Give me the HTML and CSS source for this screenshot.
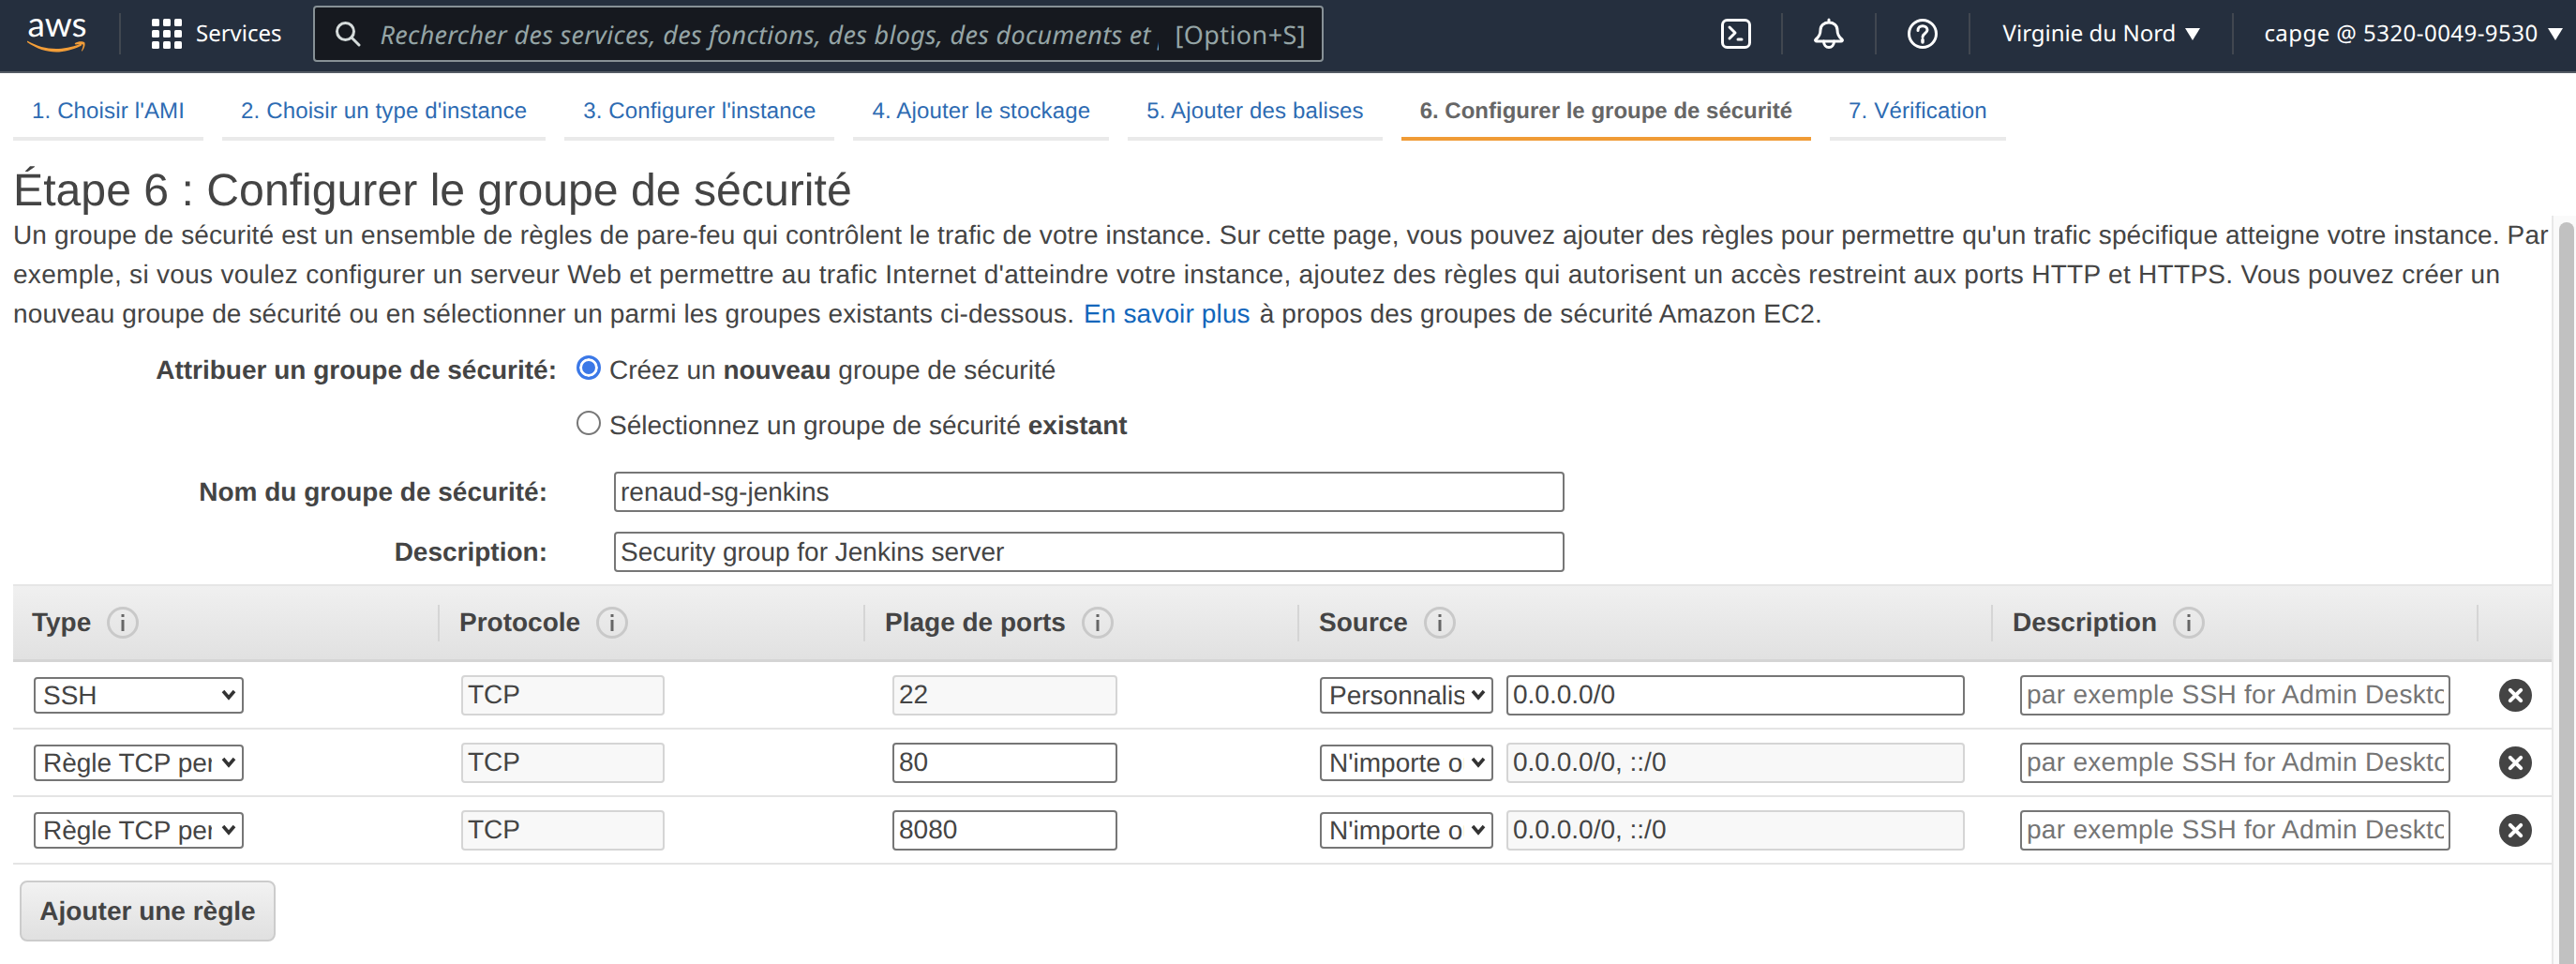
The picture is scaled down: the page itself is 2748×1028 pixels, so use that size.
FILE: index.html
```html
<!DOCTYPE html>
<html lang="fr">
<head>
  <meta charset="UTF-8">
  <title>Configurer le groupe de sécurité</title>
  <link rel="stylesheet" href="styles.css">
</head>
<body>
  <!-- Top bar -->
  <nav class="topbar">
    <div class="aws-logo">
      <span class="aws-word">aws</span>
      <svg class="aws-smile" width="64" height="15" viewBox="0 0 64 15">
        <path d="M0 2C10 9 21 12.500 31 12.500C39 12.500 49 10 57 6C59 5 58 3 56 4C48 7.500 38 9 31 9C20 9 10 6 1 1C0 .5-.5 1.500 0 2Z"/>
        <path d="M51 3C54 1 59 1 61 2C62 3 62 7 59 11C58.500 12 58 11.500 58 11C59 9 60 5 59.500 4.500C59 4 55 4 52 4.500C51 4.600 50.500 3.500 51 3Z"/>
      </svg>
    </div>
    <span class="nav-sep sep-logo"></span>
    <svg class="grid-icon" width="32" height="32" viewBox="0 0 32 32">
      <rect width="8" height="8" rx="1.500"/><rect x="12" width="8" height="8" rx="1.500"/><rect x="24" width="8" height="8" rx="1.500"/>
      <rect y="12" width="8" height="8" rx="1.500"/><rect x="12" y="12" width="8" height="8" rx="1.500"/><rect x="24" y="12" width="8" height="8" rx="1.500"/>
      <rect y="24" width="8" height="8" rx="1.500"/><rect x="12" y="24" width="8" height="8" rx="1.500"/><rect x="24" y="24" width="8" height="8" rx="1.500"/>
    </svg>
    <span class="services">Services</span>
    <div class="search">
      <svg class="search-icon" width="28" height="28" viewBox="0 0 28 28">
        <circle cx="11.500" cy="11.500" r="9"/>
        <path d="M18 18l8 8"/>
      </svg>
      <input class="search-input" type="text" placeholder="Rechercher des services, des fonctions, des blogs, des documents et plus encore">
      <span class="search-key">[Option+S]</span>
    </div>
    <svg class="nav-icon icon-terminal" width="32" height="32" viewBox="0 0 32 32">
      <rect x="1.500" y="1.500" width="29" height="29" rx="5"/>
      <path d="M9 9l6 6-6 6M18 22h4"/>
    </svg>
    <span class="nav-sep"></span>
    <svg class="nav-icon icon-bell" width="32" height="34" viewBox="0 0 32 34">
      <path d="M16 2v3M2 23c4-3 5-6 5-10 0-5 4-8 9-8s9 3 9 8c0 4 1 7 5 10 1 1 0 2-1 2H3c-1 0-2-1-1-2Z"/>
      <path d="M10.500 25c0 4 2.500 6.500 5.500 6.500s5.500-2.500 5.500-6.500"/>
    </svg>
    <span class="nav-sep"></span>
    <svg class="nav-icon icon-help" width="32" height="32" viewBox="0 0 32 32">
      <circle cx="16" cy="16" r="14.500"/>
      <path d="M11 12.500c0-3 2.200-4.800 5-4.800s5 1.800 5 4.300c0 3.500-5 3.500-5 7.500"/>
      <path class="help-dot" d="M16 22.500v2.500"/>
    </svg>
    <span class="nav-sep"></span>
    <span class="nav-menu menu-region">Virginie du Nord <i class="caret"></i></span>
    <span class="nav-sep"></span>
    <span class="nav-menu menu-account">capge @ 5320-0049-9530 <i class="caret"></i></span>
  </nav>

  <!-- Wizard tabs -->
  <ul class="tabs">
    <li class="tab">1. Choisir l'AMI</li>
    <li class="tab">2. Choisir un type d'instance</li>
    <li class="tab">3. Configurer l'instance</li>
    <li class="tab">4. Ajouter le stockage</li>
    <li class="tab">5. Ajouter des balises</li>
    <li class="tab tab-active">6. Configurer le groupe de sécurité</li>
    <li class="tab">7. Vérification</li>
  </ul>

  <h1 class="page-title">Étape 6 : Configurer le groupe de sécurité</h1>

  <div class="scroll-area">
    <main class="content">
      <p class="intro">Un groupe de sécurité est un ensemble de règles de pare-feu qui contrôlent le trafic de votre instance. Sur cette page, vous pouvez ajouter des règles pour permettre qu'un trafic spécifique atteigne votre instance. Par <span class="intro-wide">exemple, si vous voulez configurer un serveur Web et permettre au trafic Internet d'atteindre votre instance, ajoutez des règles qui autorisent un accès restreint aux ports HTTP et HTTPS. Vous pouvez créer un</span> nouveau groupe de sécurité ou en sélectionner un parmi les groupes existants ci-dessous. <a class="learn-more" href="#">En savoir plus</a> à propos des groupes de sécurité Amazon EC2.</p>

      <div class="radio-row radio-first">
        <span class="radio-title">Attribuer un groupe de sécurité:</span>
        <label class="radio-label"><input class="radio" type="radio" name="sg" checked><span>Créez un <b>nouveau</b> groupe de sécurité</span></label>
      </div>
      <div class="radio-row">
        <span class="radio-title"></span>
        <label class="radio-label"><input class="radio" type="radio" name="sg"><span>Sélectionnez un groupe de sécurité <b>existant</b></span></label>
      </div>

      <div class="field-row field-name">
        <label class="field-label">Nom du groupe de sécurité:</label>
        <input class="text-input field-input" type="text" value="renaud-sg-jenkins">
      </div>
      <div class="field-row field-desc">
        <label class="field-label">Description:</label>
        <input class="text-input field-input" type="text" value="Security group for Jenkins server">
      </div>

      <table class="rules">
        <colgroup>
          <col class="col-type"><col class="col-proto"><col class="col-ports"><col class="col-source"><col class="col-desc"><col class="col-del">
        </colgroup>
        <thead>
          <tr>
            <th><div class="th-inner th-first">Type <svg class="info" width="34" height="34" viewBox="0 0 34 34"><circle cx="17" cy="17" r="15.500"/><path d="M17 14v12M17 8v3"/></svg></div></th>
            <th><div class="th-inner">Protocole <svg class="info" width="34" height="34" viewBox="0 0 34 34"><circle cx="17" cy="17" r="15.500"/><path d="M17 14v12M17 8v3"/></svg></div></th>
            <th><div class="th-inner">Plage de ports <svg class="info" width="34" height="34" viewBox="0 0 34 34"><circle cx="17" cy="17" r="15.500"/><path d="M17 14v12M17 8v3"/></svg></div></th>
            <th><div class="th-inner">Source <svg class="info" width="34" height="34" viewBox="0 0 34 34"><circle cx="17" cy="17" r="15.500"/><path d="M17 14v12M17 8v3"/></svg></div></th>
            <th><div class="th-inner">Description <svg class="info" width="34" height="34" viewBox="0 0 34 34"><circle cx="17" cy="17" r="15.500"/><path d="M17 14v12M17 8v3"/></svg></div></th>
            <th><div class="th-inner"></div></th>
          </tr>
        </thead>
        <tbody>
          <tr>
            <td class="cell-type"><select class="select select-type"><option>SSH</option></select></td>
            <td class="cell-proto"><input class="text-input input-proto" type="text" value="TCP" disabled></td>
            <td class="cell-ports"><input class="text-input input-ports" type="text" value="22" disabled></td>
            <td class="cell-source"><div class="source-pair"><select class="select select-source"><option>Personnalisé</option></select><input class="text-input input-cidr" type="text" value="0.0.0.0/0"></div></td>
            <td class="cell-desc"><input class="text-input input-desc" type="text" placeholder="par exemple SSH for Admin Desktop"></td>
            <td class="cell-del"><svg class="del-icon" width="35" height="35" viewBox="0 0 34 34"><circle cx="17" cy="17" r="17"/><path d="M11.500 11.500l11 11M22.500 11.500l-11 11"/></svg></td>
          </tr>
          <tr>
            <td class="cell-type"><select class="select select-type"><option>Règle TCP personnalisée</option></select></td>
            <td class="cell-proto"><input class="text-input input-proto" type="text" value="TCP" disabled></td>
            <td class="cell-ports"><input class="text-input input-ports" type="text" value="80"></td>
            <td class="cell-source"><div class="source-pair"><select class="select select-source"><option>N'importe où</option></select><input class="text-input input-cidr" type="text" value="0.0.0.0/0, ::/0" disabled></div></td>
            <td class="cell-desc"><input class="text-input input-desc" type="text" placeholder="par exemple SSH for Admin Desktop"></td>
            <td class="cell-del"><svg class="del-icon" width="35" height="35" viewBox="0 0 34 34"><circle cx="17" cy="17" r="17"/><path d="M11.500 11.500l11 11M22.500 11.500l-11 11"/></svg></td>
          </tr>
          <tr>
            <td class="cell-type"><select class="select select-type"><option>Règle TCP personnalisée</option></select></td>
            <td class="cell-proto"><input class="text-input input-proto" type="text" value="TCP" disabled></td>
            <td class="cell-ports"><input class="text-input input-ports" type="text" value="8080"></td>
            <td class="cell-source"><div class="source-pair"><select class="select select-source"><option>N'importe où</option></select><input class="text-input input-cidr" type="text" value="0.0.0.0/0, ::/0" disabled></div></td>
            <td class="cell-desc"><input class="text-input input-desc" type="text" placeholder="par exemple SSH for Admin Desktop"></td>
            <td class="cell-del"><svg class="del-icon" width="35" height="35" viewBox="0 0 34 34"><circle cx="17" cy="17" r="17"/><path d="M11.500 11.500l11 11M22.500 11.500l-11 11"/></svg></td>
          </tr>
        </tbody>
      </table>

      <button class="add-rule" type="button">Ajouter une règle</button>
    </main>
    <div class="scrollbar"><div class="scrollbar-thumb"></div></div>
  </div>
</body>
</html>
```

FILE: styles.css
```css
* {
  box-sizing: border-box;
}

html,
body {
  height: 100%;
}

body {
  margin: 0;
  overflow: hidden;
  background-color: #fff;
  color: #444;
  font-family: "Liberation Sans", Arial, sans-serif;
  font-size: 28px;
  text-rendering: geometricPrecision;
}

input,
select,
button {
  text-rendering: geometricPrecision;
}

/* Top bar */
.topbar {
  display: flex;
  align-items: center;
  height: 78px;
  padding-bottom: 4px;
  border-bottom: 2px solid #545b64;
  background-color: #252f3e;
  color: #fff;
  font-family: "Noto Sans", Roboto, sans-serif;
  font-size: 24px;
}

.aws-logo {
  display: flex;
  flex-direction: column;
  align-items: center;
  width: 64px;
  margin-left: 29px;
}

.aws-word {
  font-family: Lato, sans-serif;
  font-size: 37px;
  line-height: 30px;
  height: 30px;
  margin-top: -4px;
}

.aws-smile {
  margin-top: 3px;
  fill: #f29d38;
}

.nav-sep {
  flex: none;
  width: 2px;
  height: 44px;
  background-color: #414750;
}

.sep-logo {
  margin-left: 34px;
}

.grid-icon {
  flex: none;
  margin-left: 33px;
  fill: #fff;
}

.services {
  margin-bottom: 2px;
  margin-left: 15px;
}

.search {
  display: flex;
  align-items: center;
  flex: none;
  width: 1078px;
  height: 60px;
  margin-left: 33px;
  margin-right: 424px;
  padding-left: 21px;
  border: 2px solid #879196;
  border-radius: 4px;
  background-color: #16191f;
}

.search-icon {
  flex: none;
  fill: none;
  stroke: #d5dbdb;
  stroke-width: 3;
  stroke-linecap: round;
}

.search-input {
  flex: none;
  width: 830px;
  margin-left: 21px;
  padding: 0;
  border: none;
  outline: none;
  background: transparent;
  font-family: "Noto Sans", Roboto, sans-serif;
  font-size: 27px;
  font-style: italic;
  letter-spacing: .3px;
}

.search-input::placeholder {
  color: #95a5a6;
  opacity: 1;
}

.search-key {
  margin-left: 18px;
  color: #95a5a6;
  font-size: 27px;
  letter-spacing: .4px;
  white-space: nowrap;
}

.nav-icon {
  flex: none;
  fill: none;
  stroke: #fff;
  stroke-width: 3;
  stroke-linecap: round;
  stroke-linejoin: round;
}

.icon-terminal {
  margin-right: 32px;
}

.icon-bell {
  margin: 0 33px;
}

.icon-help {
  margin: 0 33px;
}

.help-dot {
  stroke-width: 3.500;
}

.nav-menu {
  display: flex;
  align-items: center;
  gap: 10px;
  margin-bottom: 2px;
  white-space: nowrap;
}

.menu-region {
  margin-left: 35px;
  margin-right: 34px;
}

.menu-account {
  margin-left: 32px;
  letter-spacing: .45px;
}

.caret {
  width: 0;
  height: 0;
  margin-top: 2px;
  border-left: 8px solid transparent;
  border-right: 8px solid transparent;
  border-top: 13px solid #fff;
}

/* Wizard tabs */
.tabs {
  display: flex;
  gap: 20px;
  margin: 0;
  padding: 0 0 0 14px;
  list-style: none;
}

.tab {
  height: 72px;
  padding: 27px 20px 0;
  border-bottom: 4px solid #eaeaea;
  color: #2d6bb2;
  font-size: 24px;
  letter-spacing: .15px;
  line-height: 28px;
  white-space: nowrap;
}

.tab-active {
  border-bottom-color: #f09b36;
  color: #666;
  font-weight: bold;
  letter-spacing: 0;
}

.page-title {
  margin: 27px 0 0 14px;
  font-size: 48.200px;
  font-weight: normal;
  line-height: 53px;
  color: #444;
}

.scroll-area {
  display: flex;
  height: 798px;
}

.content {
  width: 2722px;
  padding-left: 14px;
}

.scrollbar {
  flex: none;
  width: 26px;
  padding: 7px 2px 0 6px;
  border-left: 2px solid #e8e8e8;
  background-color: #fafafa;
}

.scrollbar-thumb {
  height: 100%;
  border-radius: 8px 8px 0 0;
  background-color: #c1c1c1;
}

.intro {
  margin: 0;
  letter-spacing: .13px;
  line-height: 42px;
}

.intro-wide {
  letter-spacing: .3px;
}

.learn-more {
  margin: 0 2px 0 2px;
  color: #1166bb;
  text-decoration: none;
}

/* Radio rows */
.radio-row {
  display: flex;
  align-items: center;
  height: 59px;
}

.radio-first {
  margin-top: 9px;
}

.radio-title {
  width: 580px;
  font-weight: bold;
  text-align: right;
}

.radio-label {
  display: flex;
  align-items: center;
  margin-left: 21px;
  white-space: pre;
}

.radio {
  appearance: none;
  flex: none;
  width: 26px;
  height: 26px;
  margin: -5px 9px 0 0;
  border: 2px solid #777;
  border-radius: 50%;
  background-color: #fff;
}

.radio:checked {
  border: 3px solid #3b78e7;
  background-color: #3b78e7;
  box-shadow: inset 0 0 0 3px #fff;
}

/* Name / description */
.field-row {
  display: flex;
  align-items: center;
}

.field-name {
  margin-top: 20px;
}

.field-desc {
  margin-top: 21px;
}

.field-label {
  width: 570px;
  margin-right: 71px;
  font-weight: bold;
  text-align: right;
}

.text-input {
  height: 43px;
  padding: 0 5px;
  border: 2px solid #767676;
  border-radius: 4px;
  outline: none;
  background-color: #fff;
  color: #444;
  font-family: "Liberation Sans", Arial, sans-serif;
  font-size: 28px;
}

.text-input::placeholder {
  color: #757575;
  letter-spacing: .3px;
  opacity: 1;
}

.text-input:disabled {
  border-color: #d5d5d5;
  background-color: #f8f8f8;
  color: #444;
}

.field-input {
  width: 1014px;
}

/* Rules table */
.rules {
  width: 2708px;
  margin-top: 13px;
  table-layout: fixed;
  border-collapse: separate;
  border-spacing: 0;
}

.col-type { width: 453px; }
.col-proto { width: 454px; }
.col-ports { width: 463px; }
.col-source { width: 740px; }
.col-desc { width: 518px; }
.col-del { width: 80px; }

.rules th {
  height: 83px;
  padding: 0;
  border-top: 2px solid #e6e6e6;
  border-bottom: 3px solid #d4d4d4;
  background: linear-gradient(#f0f0f0, #e1e1e1);
  text-align: left;
}

.th-inner {
  display: flex;
  align-items: center;
  gap: 17px;
  height: 39px;
  padding-left: 21px;
  border-left: 2px solid #d5d5d5;
  font-weight: bold;
  white-space: nowrap;
}

.th-first {
  padding-left: 20px;
  border-left: none;
}

.info {
  flex: none;
  fill: none;
  stroke: #c9c9c9;
  stroke-width: 3;
}

.info path {
  stroke: #666;
}

.rules td {
  height: 72px;
  padding: 0;
  border-bottom: 2px solid #e4e4e4;
}

.rules .cell-type { padding-left: 22px; }
.rules .cell-proto { padding-left: 25px; }
.rules .cell-ports { padding-left: 31px; }
.rules .cell-source { padding-left: 24px; }
.rules .cell-desc { padding-left: 31px; }
.rules .cell-del { padding-left: 24px; }

.select {
  appearance: none;
  display: block;
  height: 39px;
  padding: 0 32px 0 8px;
  border: 2px solid #767676;
  border-radius: 4px;
  outline: none;
  background: #fff url("data:image/svg+xml;utf8,<svg xmlns='http://www.w3.org/2000/svg' width='16' height='12' viewBox='0 0 16 12'><path d='M2 2l6 7 6-7' fill='none' stroke='%23333' stroke-width='3.500'/></svg>") no-repeat right 6px center;
  color: #444;
  font-family: "Liberation Sans", Arial, sans-serif;
  font-size: 28px;
}

.select-type {
  width: 224px;
}

.select-source {
  flex: none;
  width: 185px;
  padding-right: 29px;
}

.input-proto {
  width: 217px;
}

.input-ports {
  width: 240px;
}

.source-pair {
  display: flex;
  align-items: center;
  gap: 14px;
}

.input-cidr {
  width: 489px;
}

.input-desc {
  width: 459px;
}

.del-icon {
  display: block;
  fill: #444;
  stroke: #fff;
  stroke-width: 4;
  stroke-linecap: round;
}

.del-icon circle {
  stroke: none;
}

.add-rule {
  display: block;
  width: 273px;
  height: 65px;
  margin: 17px 0 0 7px;
  padding: 0;
  border: 2px solid #ccc;
  border-radius: 8px;
  background: linear-gradient(#f2f2f2, #e0e0e0);
  color: #444;
  font-family: "Liberation Sans", Arial, sans-serif;
  font-size: 28px;
  font-weight: bold;
}
```
